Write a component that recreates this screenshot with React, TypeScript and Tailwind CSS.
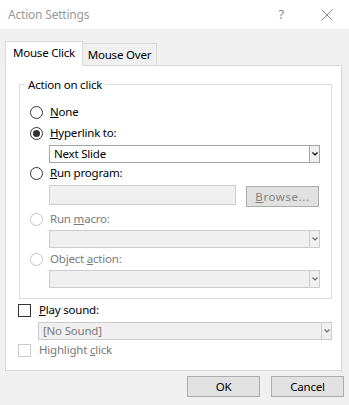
import React from "react";

const FONT = { fontFamily: '"Noto Sans", "Open Sans", sans-serif' };

function Radio({ checked = false, disabled = false }: { checked?: boolean; disabled?: boolean }) {
  return (
    <div
      className={`w-[13px] h-[13px] rounded-full border flex items-center justify-center bg-white shrink-0 ${
        disabled ? "border-[#c4c4c4]" : "border-[#333333]"
      }`}
    >
      {checked && <div className="w-[7px] h-[7px] rounded-full bg-[#333333]" />}
    </div>
  );
}

function Check({ disabled = false }: { disabled?: boolean }) {
  return (
    <div
      className={`w-[13px] h-[13px] border bg-white shrink-0 ${
        disabled ? "border-[#cccccc]" : "border-[#333333]"
      }`}
    />
  );
}

function Chevron({ disabled = false }: { disabled?: boolean }) {
  return (
    <svg width="6" height="4" viewBox="0 0 6 4">
      <path d="M0.5 0.5 L3 3 L5.5 0.5" fill="none" stroke={disabled ? "#6d6d6d" : "#000"} strokeWidth="1.2" />
    </svg>
  );
}

function Select({
  text = "",
  disabled = false,
  className = "",
}: {
  text?: string;
  disabled?: boolean;
  className?: string;
}) {
  return (
    <div
      className={`flex h-[18px] border ${
        disabled ? "border-[#cccccc] bg-[#f0f0f0] text-[#7a7a7a]" : "border-[#a5a5a5] bg-white text-black"
      } ${className}`}
    >
      <div className="flex-1 pl-[4px] leading-[16px] whitespace-nowrap overflow-hidden">{text}</div>
      <div
        className={`w-[10px] border-l flex items-center justify-center bg-[#f0f0f0] ${
          disabled ? "border-[#cccccc]" : "border-[#a5a5a5]"
        }`}
      >
        <Chevron disabled={disabled} />
      </div>
    </div>
  );
}

function RadioRow({
  children,
  checked = false,
  disabled = false,
  className = "",
}: {
  children: React.ReactNode;
  checked?: boolean;
  disabled?: boolean;
  className?: string;
}) {
  return (
    <div className={`flex items-center h-[16px] ml-[10px] gap-[7px] ${className}`}>
      <Radio checked={checked} disabled={disabled} />
      <span className={`leading-[16px] ${disabled ? "text-[#7a7a7a]" : "text-black"}`}>{children}</span>
    </div>
  );
}

export default function App() {
  return (
    <div
      className="w-[349px] h-[405px] bg-[#f0f0f0] text-[11.5px] tracking-[-0.2px] overflow-hidden flex flex-col"
      style={FONT}
    >
      {/* Title bar */}
      <div className="h-[29px] bg-white flex items-center shrink-0">
        <span className="ml-[8px] text-[#999999] text-[12px] tracking-[-0.2px]">Action Settings</span>
        <span className="ml-auto text-[#8a8a8a] text-[13px] mr-[37px]">?</span>
        <svg width="12" height="12" viewBox="0 0 12 12" className="mr-[16px]">
          <path d="M0.5 0.5 L11.5 11.5 M11.5 0.5 L0.5 11.5" stroke="#8a8a8a" strokeWidth="1" fill="none" />
        </svg>
      </div>

      {/* Tabs */}
      <div className="flex items-end h-[25px] mt-[12px] ml-[5px] shrink-0">
        <div className="relative z-10 h-[25px] w-[78px] bg-white border-t border-l border-r border-[#d9d9d9] flex items-center justify-center pb-[2px]">
          Mouse Click
        </div>
        <div className="h-[23px] w-[74px] bg-[#f0f0f0] border-t border-r border-[#d9d9d9] flex items-center justify-center">
          Mouse Over
        </div>
      </div>

      {/* Panel */}
      <div className="-mt-px ml-[5px] w-[337px] bg-white border border-[#d9d9d9] pb-[12px] shrink-0">
        {/* Group box */}
        <div className="mt-[18px] ml-[13px] w-[313px] border border-[#dcdcdc] pb-[10px] flex flex-col">
          <div className="-mt-[8px] ml-[5px] px-[3px] bg-white w-fit leading-[16px] h-[16px]">Action on click</div>

          <RadioRow className="mt-[11px]">
            <span className="underline">N</span>one
          </RadioRow>
          <RadioRow className="mt-[5px]" checked>
            <span className="underline">H</span>yperlink to:
          </RadioRow>
          <Select text="Next Slide" className="mt-[4px] ml-[29px] w-[271px]" />
          <RadioRow className="mt-[2px]">
            <span className="underline">R</span>un program:
          </RadioRow>
          <div className="flex items-start mt-[4px] ml-[29px] h-[22px]">
            <div className="w-[187px] h-[20px] border border-[#cccccc] bg-[#f0f0f0]" />
            <div className="ml-[10px] mt-[1px] w-[73px] h-[21px] border border-[#adadad] bg-[#e1e1e1] text-[#838383] flex items-center justify-center tracking-[0.6px]">
              <span className="underline">B</span>rowse...
            </div>
          </div>
          <RadioRow className="mt-[4px]" disabled>
            Run <span className="underline">m</span>acro:
          </RadioRow>
          <Select disabled className="mt-[3px] ml-[29px] w-[271px]" />
          <RadioRow className="mt-[3px]" disabled>
            Object <span className="underline">a</span>ction:
          </RadioRow>
          <Select disabled className="mt-[3px] ml-[29px] w-[271px]" />
        </div>

        {/* Play sound */}
        <div className="flex items-center h-[16px] mt-[3px] ml-[12px] gap-[8px]">
          <Check />
          <span className="leading-[16px]">
            <span className="underline">P</span>lay sound:
          </span>
        </div>
        <Select text="[No Sound]" disabled className="mt-[4px] ml-[32px] w-[294px]" />
        <div className="flex items-center h-[16px] mt-[2px] ml-[12px] gap-[8px]">
          <Check disabled />
          <span className="leading-[16px] text-[#7a7a7a]">
            Highlight <span className="underline">c</span>lick
          </span>
        </div>
      </div>

      {/* Buttons */}
      <div className="flex justify-end gap-[11px] mt-[5px] pr-[5px] shrink-0">
        <div className="w-[73px] h-[21px] border border-[#adadad] bg-[#e1e1e1] flex items-center justify-center">OK</div>
        <div className="w-[73px] h-[21px] border border-[#adadad] bg-[#e1e1e1] flex items-center justify-center">Cancel</div>
      </div>
    </div>
  );
}
